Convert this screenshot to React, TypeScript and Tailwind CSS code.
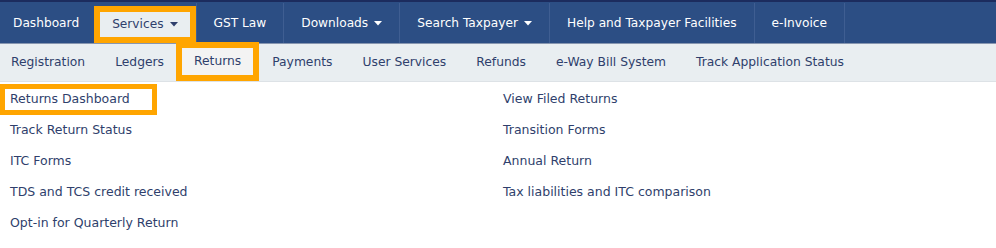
import { ReactNode } from 'react'

const topItems = [
  { label: 'Dashboard', caret: false },
  { label: 'Services', caret: true, active: true },
  { label: 'GST Law', caret: false },
  { label: 'Downloads', caret: true },
  { label: 'Search Taxpayer', caret: true },
  { label: 'Help and Taxpayer Facilities', caret: false },
  { label: 'e-Invoice', caret: false },
]

const subItems = [
  'Registration',
  'Ledgers',
  'Returns',
  'Payments',
  'User Services',
  'Refunds',
  'e-Way Bill System',
  'Track Application Status',
]

const leftLinks = [
  'Returns Dashboard',
  'Track Return Status',
  'ITC Forms',
  'TDS and TCS credit received',
  'Opt-in for Quarterly Return',
]

const rightLinks = [
  'View Filed Returns',
  'Transition Forms',
  'Annual Return',
  'Tax liabilities and ITC comparison',
]

function Caret() {
  return (
    <svg width="8" height="5" viewBox="0 0 8 5" className="ml-[6px] inline-block">
      <path d="M0 0 L8 0 L4 4.5 Z" fill="currentColor" />
    </svg>
  )
}

function TopItem({ label, caret, active }: { label: string; caret?: boolean; active?: boolean }) {
  if (active) {
    return (
      <div className="flex h-full items-stretch border-r border-[#3f5e92] pt-[3px]">
        <div className="flex items-stretch border-[6px] border-[#ffa500] bg-[#ffa500]">
          <div className="flex items-center bg-[#e9eef1] px-[12px] text-[#2f3f6c]">
            {label}
            {caret && <Caret />}
          </div>
        </div>
      </div>
    )
  }
  return (
    <div className="flex h-full items-center border-r border-[#3f5e92] px-[17px] text-white">
      {label}
      {caret && <Caret />}
    </div>
  )
}

function Link({ children, highlight }: { children: ReactNode; highlight?: boolean }) {
  return (
    <div
      className={
        'flex h-[31px] items-center border-[5px] pl-[5px] ' +
        (highlight ? 'w-[157px] border-[#ffa500]' : 'border-transparent')
      }
    >
      {children}
    </div>
  )
}

export default function App() {
  return (
    <div className="h-[248px] w-[996px] bg-white" style={{ fontFamily: '"DejaVu Sans", Verdana, sans-serif' }}>
      {/* top bar */}
      <div className="border-t-[2px] border-[#1c2c5e] bg-[#2c4e84] text-[12.2px]">
        <div className="flex h-[41px] items-stretch pt-[1px]">
          <div className="flex h-full items-center pl-[13px] pr-[15px] text-white">Dashboard</div>
          {topItems.slice(1).map((t) => (
            <TopItem key={t.label} {...t} />
          ))}
        </div>
      </div>
      <div className="h-[1px] bg-[#8796b0]" />

      {/* sub bar */}
      <div className="flex h-[38px] items-stretch border-b border-[#dde2e6] bg-[#e9eef1] text-[12.3px] text-[#2f3f6c]">
        {subItems.map((s, i) =>
          s === 'Returns' ? (
            <div key={s} className="-mt-[2px] -ml-[3px] mr-[-2px] flex items-stretch border-[6px] border-[#ffa500]">
              <div className="flex items-center bg-[#f3f3f3] px-[12px]">{s}</div>
            </div>
          ) : (
            <div key={s} className={'flex items-center ' + (i === 0 ? 'pl-[11px] pr-[15px]' : 'px-[15px]')}>
              {s}
            </div>
          )
        )}
      </div>

      {/* dropdown */}
      <div className="flex pt-[2px] text-[12.5px] text-[#2f3f6c]">
        <div className="w-[493px]">
          {leftLinks.map((l, i) => (
            <Link key={l} highlight={i === 0}>
              {l}
            </Link>
          ))}
        </div>
        <div>
          {rightLinks.map((l) => (
            <Link key={l}>{l}</Link>
          ))}
        </div>
      </div>
    </div>
  )
}
